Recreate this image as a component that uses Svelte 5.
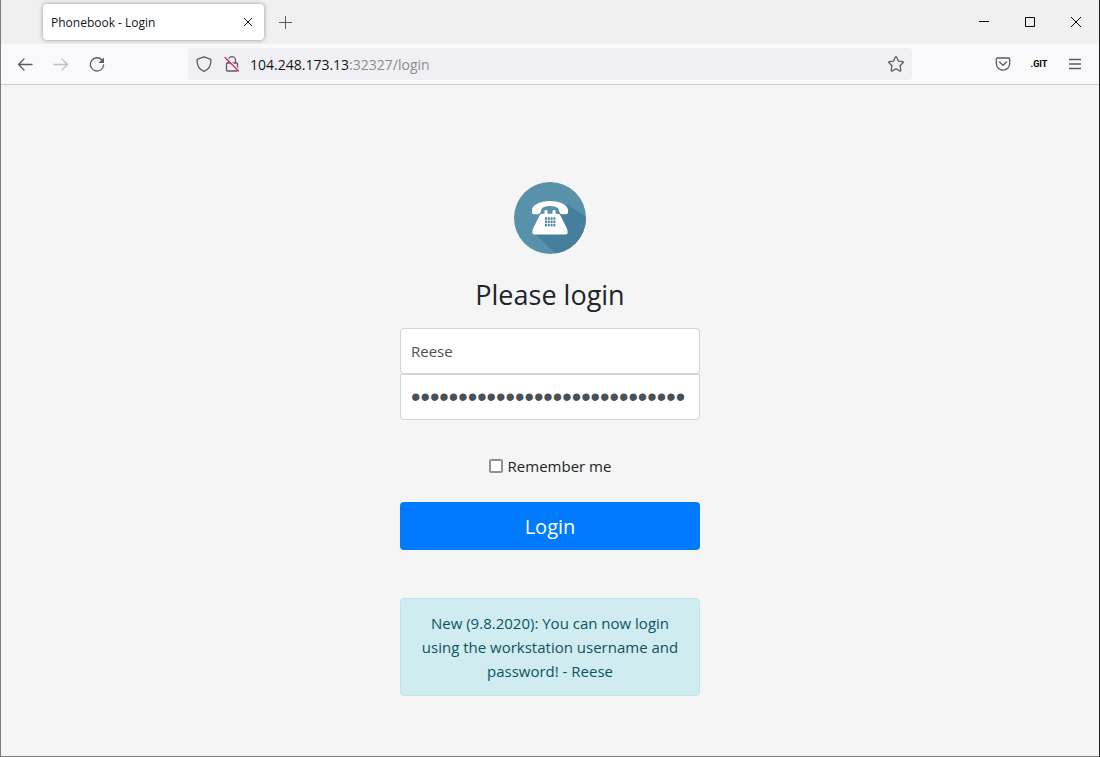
<script lang="ts">
  const host = "104.248.173.13";
  const path = ":32327/login";

  const keys = [0, 1, 2].flatMap((row) => [0, 1, 2, 3].map((col) => ({ x: 31 + col * 2.8, y: 35.3 + row * 3.3 })));

  let username = $state("Reese");
  let password = $state("x".repeat(29));
  let remember = $state(false);
</script>

<div class="window">
  <header class="titlebar">
    <div class="tab">
      <span class="tab-title">Phonebook - Login</span>
      <button class="tab-close" aria-label="Close tab">
        <svg width="10" height="10" viewBox="0 0 10 10"><path d="M1 1l8 8M9 1l-8 8" /></svg>
      </button>
    </div>
    <button class="new-tab" aria-label="New tab">
      <svg width="13" height="13" viewBox="0 0 13 13"><path d="M6.5 0v13M0 6.5h13" /></svg>
    </button>
    <div class="window-controls">
      <button aria-label="Minimize">
        <svg width="10" height="10" viewBox="0 0 10 10"><path d="M0 4.5h10" /></svg>
      </button>
      <button aria-label="Maximize">
        <svg width="10" height="10" viewBox="0 0 10 10"><path d="M.5.5h9v9h-9z" /></svg>
      </button>
      <button aria-label="Close">
        <svg width="10" height="10" viewBox="0 0 10 10"><path d="M0 0l10 10M10 0L0 10" /></svg>
      </button>
    </div>
  </header>

  <nav class="toolbar">
    <button class="tool" aria-label="Back">
      <svg width="16" height="16" viewBox="0 0 16 16"><path d="M15 8.5H1.500M7 3L1.500 8.500 7 14" /></svg>
    </button>
    <button class="tool" aria-label="Forward" disabled>
      <svg width="16" height="16" viewBox="0 0 16 16"><path d="M1 8.5h13.500M9 3L14.500 8.500 9 14" /></svg>
    </button>
    <button class="tool" aria-label="Reload">
      <svg width="16" height="16" viewBox="0 0 16 16">
        <path d="M13 4A6.600 6.600 0 1 0 14.600 9" />
        <path class="solid" d="M15 1.500V7H9.500z" />
      </svg>
    </button>

    <div class="urlbar">
      <svg width="16" height="16" viewBox="0 0 16 16">
        <path d="M8 .8L14.200 3.200Q15 3.500 15 4.400C14.900 10 12.500 13.500 8 15.300 3.500 13.500 1.100 10 1 4.400Q1 3.500 1.800 3.200z" />
      </svg>
      <svg width="16" height="16" viewBox="0 0 16 16">
        <path d="M4.500 7V4.200a3.500 3.500 0 0 1 7 0V7M3.500 7h9q1 0 1 1v6q0 1-1 1h-9q-1 0-1-1V8q0-1 1-1z" />
        <path class="gap" d="M2 1l13.500 13.500" />
        <path class="strike" d="M1 1.500l13.500 13.500" />
      </svg>
      <span class="address">{host}<span class="path">{path}</span></span>
      <button class="bookmark" aria-label="Bookmark this page">
        <svg width="16" height="16" viewBox="0 0 16 16">
          <path d="M7.300 1.300q.7-1.200 1.400 0l1.700 3.800 4.200.5q1.100.3.400 1.200l-3 2.900.8 4.400q0 1.200-1.100.8L8 12.800l-3.700 2.100q-1.100.4-1.100-.8L4 9.700 1 6.800q-.7-.9.400-1.200l4.200-.5z" />
        </svg>
      </button>
    </div>

    <button class="tool" aria-label="Save to Pocket">
      <svg width="16" height="16" viewBox="0 0 16 16">
        <path d="M2.500 2h11q1.200 0 1.200 1.200V7.500a6.700 6.700 0 0 1-13.400 0V3.200Q1.300 2 2.500 2zM4.500 6L8 9.300 11.500 6" />
      </svg>
    </button>
    <button class="tool git" aria-label="DotGit">.GIT</button>
    <button class="tool" aria-label="Menu">
      <svg width="12" height="16" viewBox="0 0 12 16"><path d="M0 3.500h12M0 8h12M0 12.500h12" /></svg>
    </button>
  </nav>

  <main>
    <form class="signin">
      <svg class="logo" viewBox="0 0 72 72" role="img" aria-label="Telephone">
        <defs>
          <clipPath id="disc"><circle cx="36" cy="36" r="36" /></clipPath>
        </defs>
        <g clip-path="url(#disc)">
          <path fill="#5891aa" d="M0 0h72v72H0z" />
          <path fill="#467f9b" d="M53 22L72 35v37H42L20 51z" />
        </g>
        <path
          fill="#fff"
          d="M18 28c0-5 8-9 18-9s18 4 18 9v2.500q0 1.800-2 1.800h-4q-2 0-2.500-1.800l-.8-3q-1.200-3.500-8.700-3.500t-8.700 3.500l-.8 3q-.5 1.800-2.500 1.800h-4q-2 0-2-1.800z"
        />
        <path
          fill="#fff"
          d="M28 31.800h2.500V29q0-1 1.500-1t1.500 1v2.800h5V29q0-1 1.500-1t1.500 1v2.800H44q1.500 0 2.300 1.500l6.500 13q1 2.700.8 4.700-.2 1.500-2.600 1.500H21q-2.400 0-2.600-1.500-.2-2 .8-4.700l6.500-13q.8-1.500 2.300-1.500z"
        />
        {#each keys as key}
          <rect class="key" x={key.x} y={key.y} width="2" height="2.500" />
        {/each}
      </svg>

      <h1>Please login</h1>

      <input class="field" type="text" aria-label="Username" bind:value={username} />
      <input class="field" type="password" aria-label="Password" bind:value={password} />

      <label class="remember">
        <input type="checkbox" bind:checked={remember} />
        Remember me
      </label>

      <button class="submit" type="button">Login</button>

      <div class="notice" role="alert">
        New (9.8.2020): You can now login using the workstation username and password! - Reese
      </div>
    </form>
  </main>
</div>

<style>
  :global(body) {
    margin: 0;
    background: #f5f5f5;
  }

  .window,
  .window * {
    box-sizing: border-box;
  }

  .window {
    display: flex;
    flex-direction: column;
    min-height: 100vh;
    border: 1px solid;
    border-top: 0;
    border-image: linear-gradient(to top right, #7b7b7b 50%, #1e1f22 50%) 1;
    background: #f5f5f5;
    color: #212529;
    font-family: "Segoe UI", "Open Sans", "Noto Sans", sans-serif;
  }

  button {
    display: flex;
    align-items: center;
    justify-content: center;
    padding: 0;
    border: 0;
    background: none;
    color: #5b5b66;
    font-family: inherit;
  }

  svg {
    flex: none;
    fill: none;
    stroke: currentColor;
  }

  .titlebar {
    display: flex;
    align-items: center;
    height: 44px;
    padding-left: 42px;
    background: #f0f0f0;
  }

  .tab {
    display: flex;
    align-items: center;
    justify-content: space-between;
    width: 221px;
    height: 36px;
    padding: 0 8px;
    border-radius: 4px;
    background: #fff;
    box-shadow: 0 0 4px rgba(0, 0, 0, 0.4);
    color: #15141a;
    font-size: 12px;
  }

  .tab-close {
    width: 16px;
    height: 24px;
    color: #15141a;
  }

  .new-tab {
    width: 43px;
    height: 36px;
  }

  .window-controls {
    display: flex;
    align-self: stretch;
    margin-left: auto;
  }

  .window-controls button {
    width: 46px;
    color: #000;
  }

  .toolbar {
    display: flex;
    align-items: center;
    height: 41px;
    padding: 0 6px;
    border-bottom: 1px solid #ccccce;
    background: #f9f9fb;
  }

  .tool {
    width: 36px;
    height: 32px;
  }

  .tool svg,
  .urlbar svg {
    stroke-width: 1.3;
    stroke-linecap: round;
    stroke-linejoin: round;
  }

  .tool:disabled {
    color: #bdbdc2;
  }

  .tool .solid {
    fill: currentColor;
    stroke: none;
  }

  .git {
    color: #000;
    font-family: Roboto, sans-serif;
    font-size: 9px;
    font-weight: 700;
  }

  .urlbar {
    display: flex;
    flex: 1;
    align-items: center;
    gap: 12px;
    height: 32px;
    margin: 0 73px;
    padding: 0 8px;
    border-radius: 4px;
    background: #f0f0f4;
    color: #5b5b66;
  }

  .urlbar .gap {
    stroke: #f0f0f4;
  }

  .urlbar .strike {
    stroke: #e22850;
  }

  .address {
    flex: 1;
    margin-left: -2px;
    color: #15141a;
    font-size: 14px;
  }

  .path {
    color: #8c8c90;
  }

  main {
    display: flex;
    flex: 1;
    justify-content: center;
    padding: 97px 16px 60px;
    text-align: center;
  }

  .signin {
    display: flex;
    flex-direction: column;
    align-items: center;
    width: 100%;
    max-width: 300px;
  }

  .logo {
    width: 72px;
    height: 72px;
    margin-bottom: 24px;
    stroke: none;
  }

  .key {
    fill: #4f88a3;
  }

  h1 {
    margin: 0 0 16px;
    font-size: 27px;
    font-weight: 400;
    line-height: 34px;
  }

  .field {
    width: 100%;
    height: 46px;
    padding: 10px;
    border: 1px solid #ced4da;
    border-radius: 4px;
    background: #fff;
    color: #495057;
    font-family: inherit;
    font-size: 15px;
  }

  .field[type="password"] {
    border-top-left-radius: 0;
    border-top-right-radius: 0;
    font-family: "Liberation Sans", Arial, sans-serif;
    font-size: 27px;
  }

  .remember {
    display: flex;
    align-items: center;
    gap: 5px;
    margin: 34px 0 24px;
    font-size: 15px;
    line-height: 24px;
  }

  .remember input {
    appearance: none;
    width: 14px;
    height: 14px;
    margin: 0;
    border: 2px solid #8f8f9d;
    border-radius: 2px;
    background: #fff;
  }

  .remember input:checked {
    background: #007bff;
  }

  .submit {
    width: 100%;
    height: 48px;
    margin-bottom: 48px;
    border-radius: 4px;
    background: #007bff;
    color: #fff;
    font-size: 20px;
  }

  .notice {
    width: 100%;
    padding: 12px 16px;
    border: 1px solid #bee5eb;
    border-radius: 4px;
    background: #d1ecf1;
    color: #0c5460;
    font-size: 15px;
    line-height: 24px;
  }
</style>
